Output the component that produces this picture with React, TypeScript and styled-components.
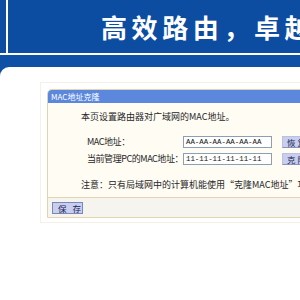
import React from "react";
import styled, { createGlobalStyle } from "styled-components";

const Global = createGlobalStyle`
  html, body { margin: 0; padding: 0; background: #ffffff; }
  body { width: 300px; height: 300px; overflow: hidden; font-family: "Noto Sans CJK SC", "Noto Sans", sans-serif; }
  #root { width: 300px; height: 300px; overflow: hidden; }
`;

const Header = styled.header`
  height: 53px;
  background: #0c4ca1;
  padding-left: 6px;
  border-bottom: 2px solid #ffffff;
  display: flex;
`;

const HeaderInner = styled.div`
  flex: 1;
  border-left: 2px solid #ffffff;
  padding-left: 93px;
  display: flex;
  align-items: center;
  overflow: hidden;
`;

const Title = styled.h1`
  margin: 0;
  color: #ffffff;
  font-family: "Noto Sans CJK SC", sans-serif;
  font-size: 26px;
  font-weight: 700;
  letter-spacing: 4.6px;
  white-space: nowrap;
  line-height: 1;
  padding-top: 1px;
`;

const BandWrap = styled.div`
  background: #0e50a6;
`;

const Band = styled.div`
  height: 12px;
`;

const Main = styled.main`
  background: #ffffff;
  border-top-left-radius: 9px;
  padding: 15px 0 0 40px;
  height: 233px;
`;

const Frame = styled.div`
  border: 1px solid #f6f1e8;
  border-right: none;
  padding: 6px 0 4px 6px;
`;

const Panel = styled.section`
  width: 420px;
  border: 1px solid #e3d3b0;
  border-top-left-radius: 5px;
  background: #fffcf4;
  overflow: hidden;
`;

const PanelTitle = styled.div`
  height: 13px;
  line-height: 13px;
  background: #5b88dd;
  color: #ffffff;
  font-size: 8px;
  padding-left: 3px;
`;

const PanelBody = styled.div`
  padding: 8px 0 6px 33px;
  font-size: 9px;
  color: #262626;
`;

const Para = styled.p`
  margin: 0;
  line-height: 12px;
  white-space: nowrap;
`;

const Form = styled.div`
  display: grid;
  grid-template-columns: 86px 89px 60px;
  column-gap: 10px;
  row-gap: 5px;
  margin: 13px 0 14px 6px;
  align-items: center;
`;

const Label = styled.span`
  line-height: 12px;
  white-space: nowrap;
  letter-spacing: -0.45px;
`;

const Field = styled.div`
  height: 12px;
  box-sizing: border-box;
  border: 1px solid #8c9fb6;
  background: #ffffff;
  font-family: "Liberation Mono", monospace;
  font-size: 7.4px;
  line-height: 10px;
  padding-left: 2px;
  color: #111;
  white-space: nowrap;
  overflow: hidden;
`;

const Btn = styled.button`
  height: 12px;
  box-sizing: border-box;
  border: 1px solid #8b93bd;
  border-top-color: #b9c0e2;
  border-left-color: #b9c0e2;
  background: #c7cef0;
  font-family: "Noto Sans CJK SC", sans-serif;
  font-size: 8.5px;
  line-height: 10px;
  color: #1c2450;
  padding: 0 4px;
  margin: 0;
  white-space: nowrap;
  text-align: left;
  letter-spacing: 2px;
`;

const SaveRow = styled.div`
  border-top: 1px solid #e3d3b0;
  background: #f6f4ef;
  padding: 4px 0 3px 4px;
  display: flex;
`;

const SaveBtn = styled(Btn)`
  width: 31px;
  padding: 0 0 0 5px;
  border-color: #7e86b8;
`;

export default function App() {
  return (
    <>
      <Global />
      <Header>
        <HeaderInner>
          <Title>高效路由，卓越性能</Title>
        </HeaderInner>
      </Header>
      <BandWrap>
        <Band />
        <Main>
          <Frame>
            <Panel>
              <PanelTitle>MAC地址克隆</PanelTitle>
              <PanelBody>
                <Para>本页设置路由器对广域网的MAC地址。</Para>
                <Form>
                  <Label>MAC地址：</Label>
                  <Field>AA-AA-AA-AA-AA-AA</Field>
                  <Btn>恢复出厂MAC</Btn>
                  <Label>当前管理PC的MAC地址：</Label>
                  <Field>11-11-11-11-11-11</Field>
                  <Btn>克隆MAC地址</Btn>
                </Form>
                <Para>注意：只有局域网中的计算机能使用“克隆MAC地址”功能。</Para>
              </PanelBody>
              <SaveRow>
                <SaveBtn>保 存</SaveBtn>
              </SaveRow>
            </Panel>
          </Frame>
        </Main>
      </BandWrap>
    </>
  );
}
